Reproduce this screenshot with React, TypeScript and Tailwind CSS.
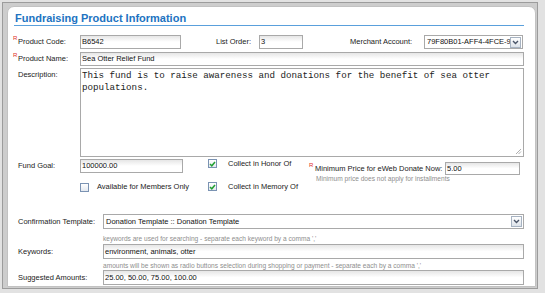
import React from 'react';

const font = { fontFamily: '"Liberation Sans", Arial, sans-serif' };

function Req() {
  return <span className="w-[5px] self-start -mt-[2px] text-[6px] leading-[8px] text-[#e0302a]">R</span>;
}

function Label({ text, req, w }: { text: string; req?: boolean; w: string }) {
  return (
    <div className={`${w} flex items-center shrink-0 text-[7.5px] text-[#222]`}>
      {req ? <Req /> : <span className="w-[5px]" />}
      <span>{text}</span>
    </div>
  );
}

function Field({ value, className }: { value: string; className: string }) {
  return (
    <div
      className={`${className} border border-[#a9a9a9] bg-linear-to-b from-[#e6e6e6] to-white to-[50%] flex items-center pl-[1px] text-[7.5px] text-[#111] overflow-hidden whitespace-nowrap`}
    >
      {value}
    </div>
  );
}

function Select({ value, className }: { value: string; className: string }) {
  return (
    <div className={`${className} border border-[#a9a9a9] bg-white flex items-center text-[7.5px] text-[#111] overflow-hidden`}>
      <span className="flex-1 pl-[2px] whitespace-nowrap overflow-hidden">{value}</span>
      <span className="w-[11px] h-[11px] mr-[1px] border border-[#a7b3c2] bg-linear-to-b from-white to-[#dde3ea] flex items-center justify-center shrink-0">
        <svg width="7" height="5" viewBox="0 0 7 5">
          <path d="M1 1 L3.5 3.5 L6 1" fill="none" stroke="#4a5568" strokeWidth="1.4" />
        </svg>
      </span>
    </div>
  );
}

function Check({ checked }: { checked?: boolean }) {
  return (
    <span className="w-[9px] h-[9px] border border-[#7b93b3] bg-linear-to-b from-white to-[#e4e9f0] flex items-center justify-center shrink-0">
      {checked && (
        <svg width="7" height="6" viewBox="0 0 7 6">
          <path d="M1 3 L2.8 4.8 L6 1" fill="none" stroke="#22a032" strokeWidth="1.5" />
        </svg>
      )}
    </span>
  );
}

export default function App() {
  return (
    <div style={font} className="w-[545px] h-[293px] bg-[#e2e2e2] pt-[2px] pl-[2px] pr-[7px] pb-[4px] flex overflow-hidden">
      <div className="flex-1 flex border border-[#9c9c9c] bg-[#cdcdcd] pl-[4px] pt-[3px] pr-[1px] pb-[1px]">
        <div className="flex-1 flex flex-col bg-white border border-[#c2c2c2] rounded-t-[7px] pl-[5px] pr-[11px] overflow-hidden">
          <div className="mt-[5px] ml-[1px] pl-[1px] border-b border-[#5aa0dc] text-[11px] leading-[13px] font-bold text-[#2173c1]">
            Fundraising Product Information
          </div>

          <div className="mt-[9px] h-[14px] flex items-center">
            <Label text="Product Code:" req w="w-[67px]" />
            <Field value="B6542" className="w-[101px] h-[14px]" />
            <span className="ml-[35px] w-[43px] text-[7.5px] text-[#222]">List Order:</span>
            <Field value="3" className="w-[44px] h-[14px]" />
            <span className="ml-[47px] w-[74px] text-[7.5px] text-[#222]">Merchant Account:</span>
            <Select value="79F80B01-AFF4-4FCE-9" className="w-[99px] h-[14px]" />
          </div>

          <div className="mt-[3px] h-[14px] flex items-center">
            <Label text="Product Name:" req w="w-[67px]" />
            <Field value="Sea Otter Relief Fund" className="flex-1 h-[14px]" />
          </div>

          <div className="mt-[2px] flex">
            <div className="w-[67px] pt-[1px] flex text-[7.5px] text-[#222] shrink-0">
              <span className="w-[5px]" />
              <span>Description:</span>
            </div>
            <div className="relative flex-1 h-[89px] border border-[#a9a9a9] bg-white pt-[1px] pl-[1px] pr-[20px]">
              <p className="text-[9.2px] leading-[11.5px] text-[#222]" style={{ fontFamily: '"Liberation Mono", "Courier New", monospace' }}>
                This fund is to raise awareness and donations for the benefit of sea otter populations.
              </p>
              <svg className="absolute right-[1px] bottom-[1px]" width="7" height="7" viewBox="0 0 7 7">
                <path d="M6 1 L1 6 M6 3.5 L3.5 6" stroke="#9a9a9a" strokeWidth="0.8" />
              </svg>
            </div>
          </div>

          <div className="mt-[2px] flex">
            <div className="w-[67px] h-[14px] flex items-center text-[7.5px] text-[#222] shrink-0">
              <span className="w-[5px]" />
              <span>Fund Goal:</span>
            </div>
            <div className="w-[128px] flex flex-col shrink-0">
              <Field value="100000.00" className="w-[103px] h-[14px]" />
              <div className="mt-[9px] h-[10px] flex items-center gap-[8px] text-[7.5px] text-[#222]">
                <Check />
                <span>Available for Members Only</span>
              </div>
            </div>
            <div className="w-[101px] flex flex-col shrink-0 text-[7.5px] text-[#222]">
              <div className="h-[9px] flex items-center gap-[11px]">
                <Check checked />
                <span>Collect in Honor Of</span>
              </div>
              <div className="mt-[14px] h-[9px] flex items-center gap-[11px]">
                <Check checked />
                <span>Collect in Memory Of</span>
              </div>
            </div>
            <div className="flex flex-col pt-[3px]">
              <div className="h-[13px] flex items-center">
                <div className="w-[136px] flex items-center text-[7.5px] text-[#222]">
                  <Req />
                  <span className="ml-[1px]">Minimum Price for eWeb Donate Now:</span>
                </div>
                <Field value="5.00" className="w-[75px] h-[13px]" />
              </div>
              <div className="pl-[7px] text-[6.6px] leading-[8px] text-[#8e8e8e]">Minimum price does not apply for installments</div>
            </div>
          </div>

          <div className="mt-[22px] h-[15px] flex items-center">
            <Label text="Confirmation Template:" w="w-[90px]" />
            <Select value="Donation Template :: Donation Template" className="flex-1 h-[15px]" />
          </div>

          <div className="mt-[6px] ml-[90px] text-[6.6px] leading-[8px] text-[#8e8e8e]">
            keywords are used for searching - separate each keyword by a comma ','
          </div>
          <div className="mt-[1px] h-[15px] flex items-center">
            <Label text="Keywords:" w="w-[90px]" />
            <Field value="environment, animals, otter" className="flex-1 h-[15px]" />
          </div>

          <div className="mt-[3px] ml-[90px] text-[6.6px] leading-[8px] text-[#8e8e8e]">
            amounts will be shown as radio buttons selection during shopping or payment - separate each by a comma ','
          </div>
          <div className="h-[15px] flex items-center">
            <Label text="Suggested Amounts:" w="w-[90px]" />
            <Field value="25.00, 50.00, 75.00, 100.00" className="flex-1 h-[15px]" />
          </div>
        </div>
      </div>
    </div>
  );
}
